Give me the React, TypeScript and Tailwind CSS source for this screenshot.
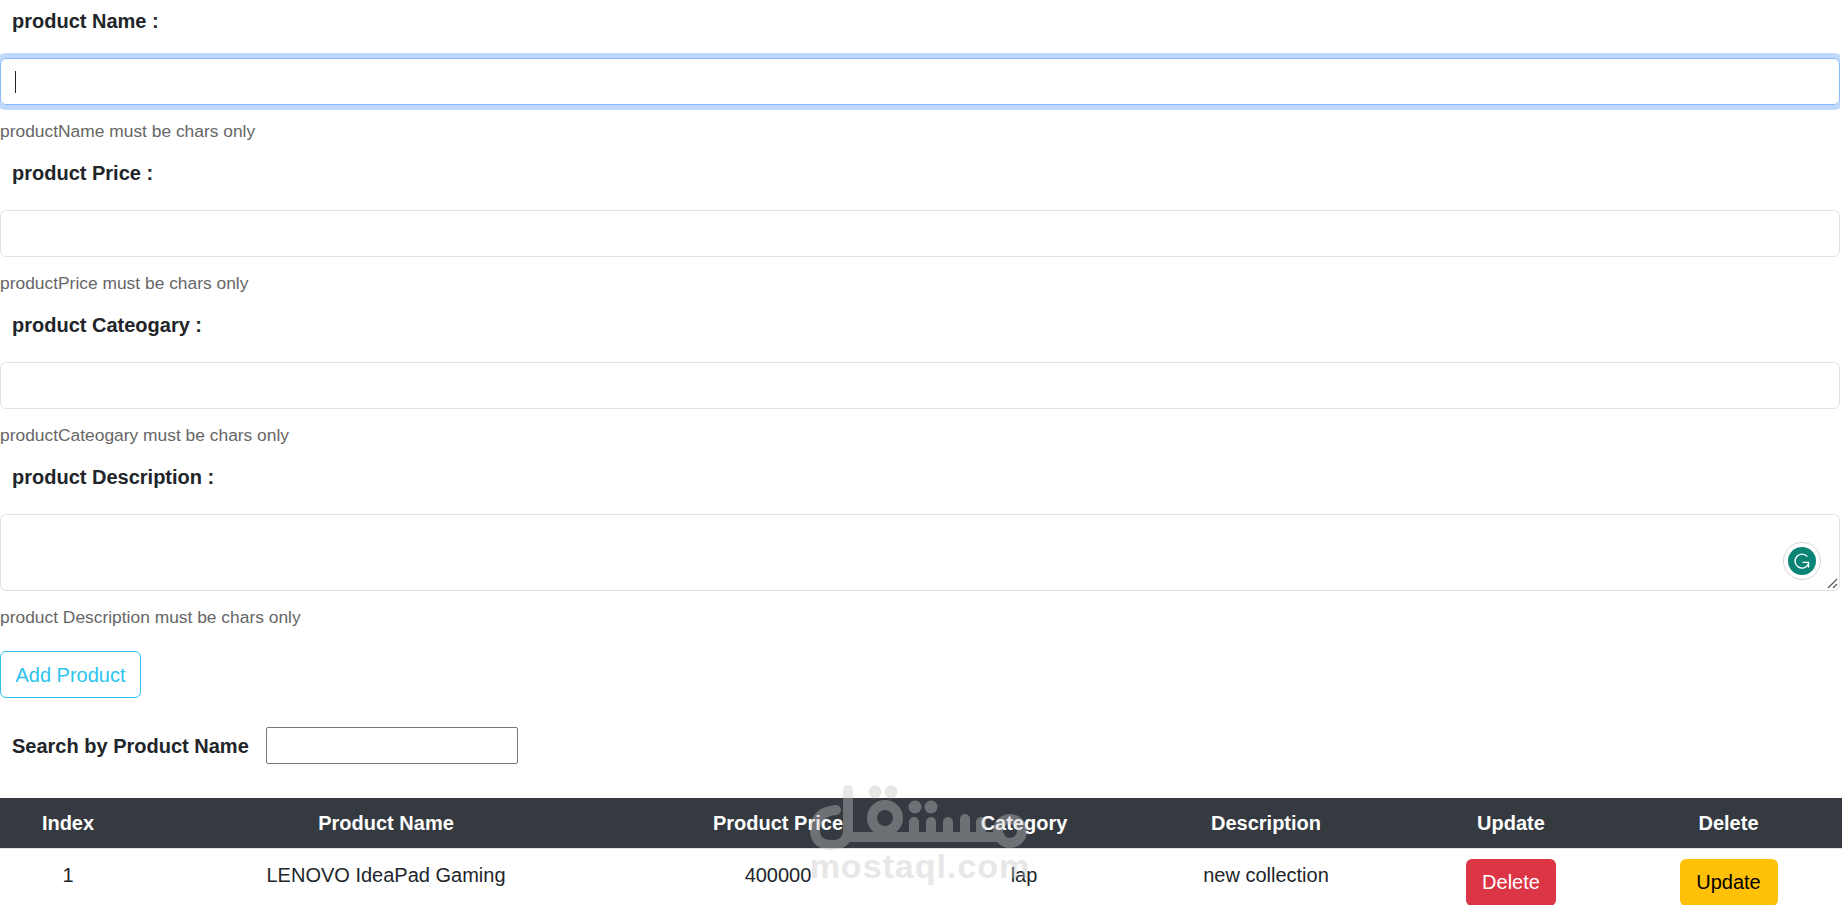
const fields = [
  { label: "product Name :", hint: "productName must be chars only", focused: true },
  { label: "product Price :", hint: "productPrice must be chars only" },
  { label: "product Cateogary :", hint: "productCateogary must be chars only" },
];

const columns = [
  { title: "Index", className: "w-[136px]" },
  { title: "Product Name", className: "w-[500px]" },
  { title: "Product Price", className: "w-[284px]" },
  { title: "Category", className: "w-[208px]" },
  { title: "Description", className: "w-[276px]" },
  { title: "Update", className: "w-[214px]" },
  { title: "Delete", className: "w-[224px] pr-[3px]" },
];

const GrammarlyBadge = () => (
  <div className="absolute right-[18px] bottom-[10px] flex h-[38px] w-[38px] items-center justify-center rounded-full border border-[#d5d8de] bg-white">
    <div className="flex h-[28px] w-[28px] items-center justify-center rounded-full bg-[#0b8475]">
      <svg width="18" height="18" viewBox="0 0 18 18" fill="none" stroke="#fff" strokeWidth="1.4">
        <path d="M14.4 4.6A7 7 0 1 0 15.4 12" />
        <path d="M9.5 10.4h6v5" />
      </svg>
    </div>
  </div>
);

const Watermark = () => (
  <div className="pointer-events-none absolute left-[800px] top-[775px] flex w-[240px] flex-col items-center opacity-40">
    <svg className="overflow-visible" width="240" height="72" viewBox="0 0 240 72" fill="none" stroke="#c4c4c4" strokeWidth="10" strokeLinecap="round">
      <path d="M36 35Q15 37 15 55Q15 70 32 70Q48 70 48 54V15" />
      <path d="M48 62H200" />
      <circle cx="85" cy="43" r="13" />
      <path d="M85 56V62M114 47V62M131 47V62M148 47V62M165 44V62M181 47V62" />
      <circle cx="210" cy="56" r="12" />
      <circle cx="75" cy="17" r="6.5" fill="#c4c4c4" stroke="none" />
      <circle cx="91" cy="17" r="6.5" fill="#c4c4c4" stroke="none" />
      <circle cx="115" cy="32" r="6.5" fill="#c4c4c4" stroke="none" />
      <circle cx="131" cy="32" r="6.5" fill="#c4c4c4" stroke="none" />
    </svg>
    <span className="text-[34px] leading-[38px] font-bold tracking-[1px] text-[#c4c4c4]">mostaql.com</span>
  </div>
);

export default function App() {
  return (
    <div className="relative h-[905px] overflow-hidden bg-white font-['Liberation_Sans',Arial,sans-serif] text-[20px] text-[#212529]">
      <form className="w-[1840px] overflow-hidden">
        {fields.map((field) => (
          <div key={field.label} className="h-[152px]">
            <label className="block h-[58px] pt-[8px] pl-[12px] leading-[27px] font-bold">{field.label}</label>
            {field.focused ? (
              <div className="flex h-[47px] items-center rounded-[6px] border border-[#86b7fe] pl-[14px] shadow-[0_0_0_5px_#bfd9fd]">
                <div className="h-[22px] w-px bg-[#212529]" />
              </div>
            ) : (
              <div className="h-[47px] rounded-[6px] border border-[#dee2e6]" />
            )}
            <p className="mt-[14px] text-[17.4px] leading-[24px] text-[#666]">{field.hint}</p>
          </div>
        ))}

        <label className="block h-[58px] pt-[8px] pl-[12px] leading-[27px] font-bold">product Description :</label>
        <div className="relative h-[77px] rounded-[6px] border border-[#dee2e6]">
          <GrammarlyBadge />
          <svg className="absolute right-[1px] bottom-[1px]" width="11" height="11" viewBox="0 0 11 11" stroke="#555" strokeWidth="1.2">
            <path d="M1 10 10 1M6 10l4-4" />
          </svg>
        </div>
        <p className="mt-[14px] text-[17.4px] leading-[24px] text-[#666]">product Description must be chars only</p>

        <button type="button" className="mt-[22px] h-[47px] w-[141px] rounded-[6px] border border-[#2cc4ec] text-[#2cc4ec]">
          Add Product
        </button>

        <div className="mt-[29px] flex h-[37px] items-center pl-[12px]">
          <span className="font-bold">Search by Product Name</span>
          <div className="ml-[17px] h-[37px] w-[252px] rounded-[2px] border border-[#767676]" />
        </div>
      </form>

      <table className="mt-[34px] w-full table-fixed border-collapse">
        <thead>
          <tr className="h-[50px] bg-[#343a40] text-white">
            {columns.map((col) => (
              <th key={col.title} className={`${col.className} pt-[1px] font-bold`}>
                {col.title}
              </th>
            ))}
          </tr>
        </thead>
        <tbody>
          <tr className="border-t border-[#dee2e6]">
            <td className="pt-[13px] pb-[8px] text-center align-top leading-[27px]">1</td>
            <td className="pt-[13px] text-center align-top leading-[27px]">LENOVO IdeaPad Gaming</td>
            <td className="pt-[13px] text-center align-top leading-[27px]">400000</td>
            <td className="pt-[13px] text-center align-top leading-[27px]">lap</td>
            <td className="pt-[13px] text-center align-top leading-[27px]">new collection</td>
            <td className="pt-[10px] text-center align-top">
              <button className="h-[47px] w-[90px] rounded-[6px] bg-[#dc3545] text-white">Delete</button>
            </td>
            <td className="pt-[10px] pr-[3px] text-center align-top">
              <button className="h-[47px] w-[98px] rounded-[6px] bg-[#ffc107] text-black">Update</button>
            </td>
          </tr>
        </tbody>
      </table>

      <Watermark />
    </div>
  );
}
